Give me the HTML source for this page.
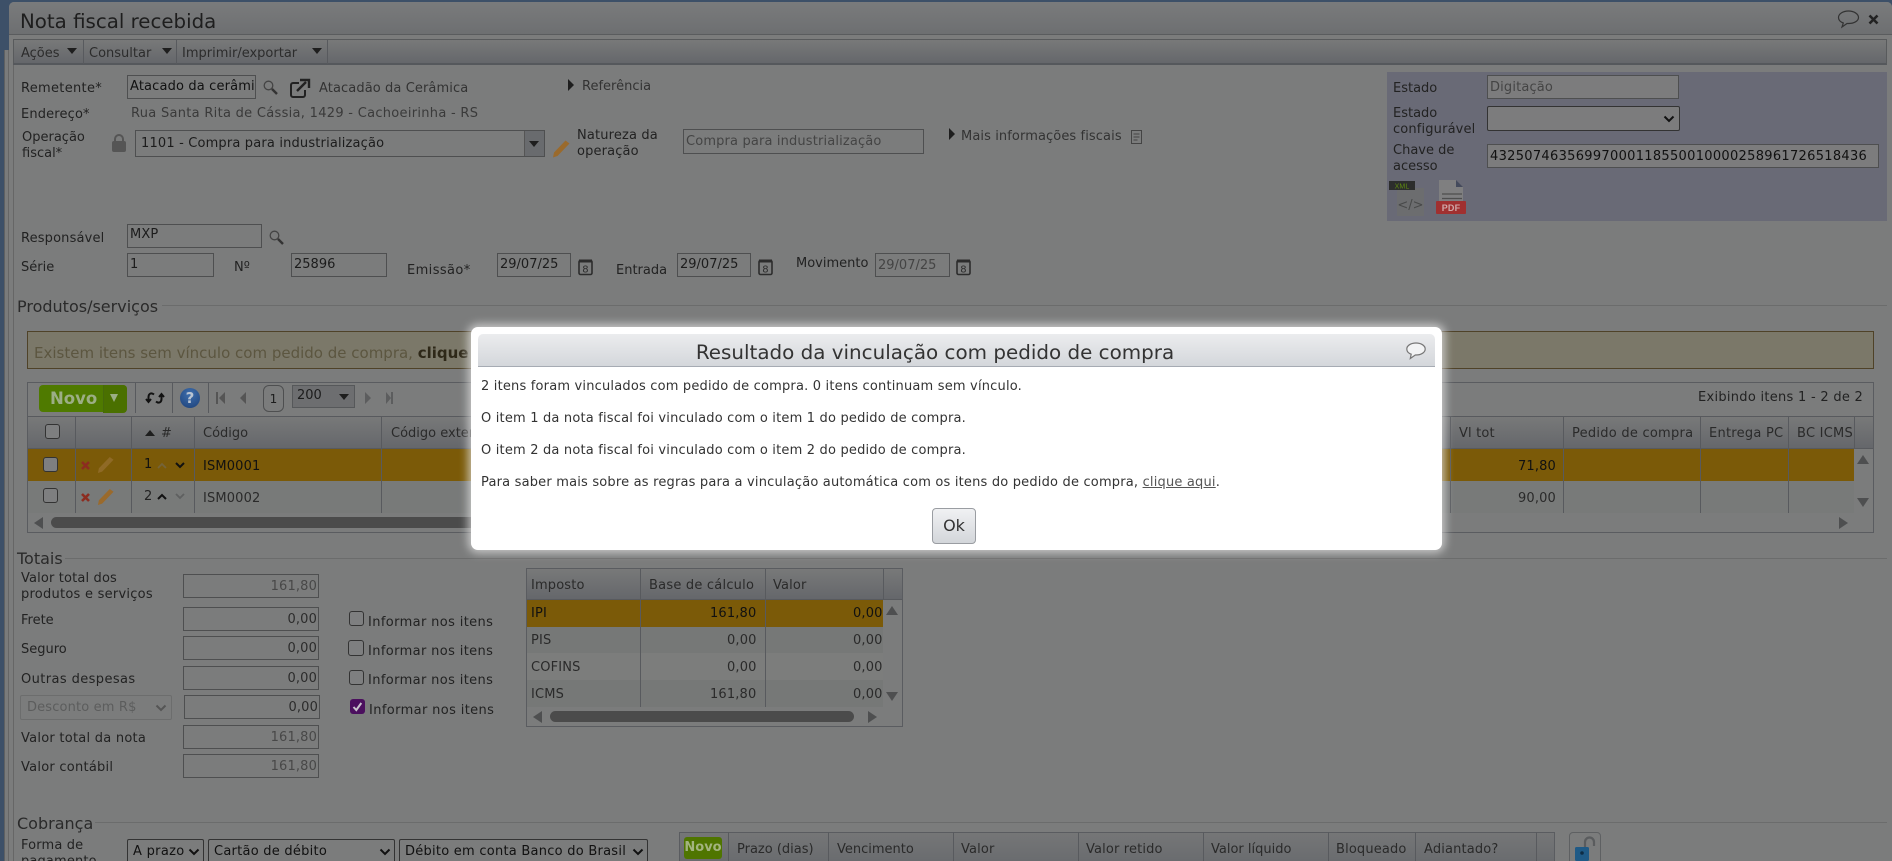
<!DOCTYPE html>
<html lang="pt-BR"><head><meta charset="utf-8"><title>Nota fiscal recebida</title>
<style>
*{box-sizing:border-box}
html,body{margin:0;padding:0;width:1892px;height:861px;overflow:hidden;background:#3d5068}
body{position:relative;font:13px/16px "DejaVu Sans","Liberation Sans",sans-serif;color:#222;letter-spacing:.15px}
.a{position:absolute}
.t{position:absolute;white-space:nowrap;line-height:16px;color:#222;margin-top:2px}
.i{position:absolute;border:1px solid #4e4f50;background:#7b7c7c;color:#1c1c1c;height:24px;line-height:22px;padding:0 2px;white-space:nowrap;overflow:hidden}
.g{color:#444}.r{text-align:right;padding-right:1px;color:#2c2c2c;line-height:24px}.rg{text-align:right;padding-right:1px;color:#484848;line-height:24px}
.s{position:absolute;border:1px solid #333;border-radius:2px;background:#7b7c7c;color:#111;height:26px;line-height:24px;padding-left:5px;white-space:nowrap;overflow:hidden}
.l{position:absolute;height:1px;background:#6b6c6c}
.v{position:absolute;width:1px;background:#585a5e}
.cb{position:absolute;border:1px solid #333;border-radius:3px;background:#7e7f80;width:15px;height:15px}
.hd{background:linear-gradient(#787979,#65676b)}
.tr{position:absolute;width:0;height:0;border-style:solid;border-color:transparent}
svg{position:absolute;overflow:visible}
.lg{position:absolute;font-size:16px;line-height:20px;color:#2a2a2a;white-space:nowrap;letter-spacing:0}
.dt{position:absolute;left:481px;white-space:nowrap;font-size:13px;line-height:16px;color:#333;letter-spacing:.19px}
.w{letter-spacing:.4px}
.n{letter-spacing:0}
</style></head><body>

<div class="a" style="left:4px;top:50px;width:9px;height:811px;background:#7a7b7b;border-left:1px solid #5e6062;border-right:1px solid #5e6062"></div>
<div class="a" style="left:9px;top:2px;width:1883px;height:859px;background:#7b7c7c;border-radius:5px 5px 0 0"></div>
<div class="a" style="left:8px;top:50px;width:1px;height:811px;background:#666"></div>
<div class="a" style="left:13px;top:65px;width:1px;height:796px;background:#666"></div>
<div class="a" style="left:9px;top:2px;width:1883px;height:33px;background:linear-gradient(#7a7b7c,#6d6f71);border-bottom:1px solid #5a5c5e;border-radius:5px 5px 0 0"></div>
<div class="t n" style="left:20px;top:8px;font-size:19.800px;line-height:24px;color:#1e1e1e">Nota fiscal recebida</div>
<svg style="left:1837px;top:10px" width="23" height="18" viewBox="0 0 23 18"><path d="M11.500 1C6 1 1.500 3.800 1.500 7.500c0 2.500 2 4.500 4.800 5.500L5 17l5-3.500h1.500c5.500 0 10-2.500 10-6S17 1 11.500 1z" fill="none" stroke="#333" stroke-width="1.200"/></svg>
<svg style="left:1868px;top:14px" width="11" height="11" viewBox="0 0 11 11"><path d="M1.500 1.500l8 8M9.500 1.500l-8 8" stroke="#222" stroke-width="2.600"/></svg>

<!-- toolbar -->
<div class="a hd" style="left:13px;top:39px;width:1874px;height:26px;border:1px solid #585a5c;border-bottom:2px solid #55585c"></div>
<div class="v" style="left:83px;top:40px;height:24px"></div><div class="v" style="left:176px;top:40px;height:24px"></div><div class="v" style="left:327px;top:40px;height:24px"></div>
<div class="t n" style="left:21px;top:44px;color:#2c2c2c">Ações</div>
<div class="t n" style="left:89px;top:44px;color:#2c2c2c">Consultar</div>
<div class="t n" style="left:182px;top:44px;color:#2c2c2c">Imprimir/exportar</div>
<div class="tr" style="left:67px;top:48px;border-width:6px 5px 0;border-top-color:#1e1e1e"></div>
<div class="tr" style="left:162px;top:48px;border-width:6px 5px 0;border-top-color:#1e1e1e"></div>
<div class="tr" style="left:312px;top:48px;border-width:6px 5px 0;border-top-color:#1e1e1e"></div>

<!-- form top -->
<div class="t" style="left:21px;top:79px;letter-spacing:.3px">Remetente*</div>
<div class="i" style="left:127px;top:75px;width:129px;color:#111">Atacado da cerâmi</div>
<svg style="left:263px;top:80px" width="15" height="15" viewBox="0 0 15 15"><circle cx="5.500" cy="5.500" r="4.300" fill="none" stroke="#444" stroke-width="1.300"/><path d="M9 9l5 5" stroke="#333" stroke-width="2.400"/></svg>
<svg style="left:290px;top:79px" width="21" height="19" viewBox="0 0 21 19"><path d="M9 4H3a2 2 0 0 0-2 2v10a2 2 0 0 0 2 2h10a2 2 0 0 0 2-2v-5" fill="none" stroke="#222" stroke-width="2"/><path d="M7 12l9-9M10 1h9v8" fill="none" stroke="#222" stroke-width="2.400"/></svg>
<div class="t" style="left:319px;top:79px;color:#333;letter-spacing:.1px">Atacadão da Cerâmica</div>
<div class="tr" style="left:568px;top:79px;border-width:6px 0 6px 6px;border-left-color:#1e1e1e"></div>
<div class="t n" style="left:582px;top:77px;color:#333">Referência</div>

<div class="t" style="left:21px;top:105px">Endereço*</div>
<div class="t" style="left:131px;top:104px;color:#3a3a3a;letter-spacing:.29px">Rua Santa Rita de Cássia, 1429 - Cachoeirinha - RS</div>
<div class="t n" style="left:22px;top:128px">Operação</div><div class="t n" style="left:22px;top:144px">fiscal*</div>
<svg style="left:112px;top:134px" width="14" height="18" viewBox="0 0 14 18"><rect x="0" y="7" width="14" height="11" rx="2" fill="#555"/><path d="M3 8V5a4 4 0 0 1 8 0v3" fill="none" stroke="#555" stroke-width="2"/></svg>
<div class="i" style="left:135px;top:130px;width:410px;height:27px;line-height:25px;padding-left:5px;letter-spacing:.17px">1101 - Compra para industrialização</div>
<div class="a hd" style="left:524px;top:131px;width:20px;height:25px;border-left:1px solid #555;background:#696b6e"></div>
<div class="tr" style="left:529px;top:141px;border-width:6px 5.500px 0;border-top-color:#1e1e1e"></div>
<svg style="left:552px;top:140px" width="18" height="18" viewBox="0 0 18 18"><path d="M13.500 .5l4 3L5.500 16 1 17.500 2 12.500z" fill="#9a6a2c"/></svg>
<div class="t" style="left:577px;top:126px">Natureza da</div><div class="t" style="left:577px;top:142px">operação</div>
<div class="i g" style="left:683px;top:129px;width:241px;height:25px;line-height:24px">Compra para industrialização</div>
<div class="tr" style="left:949px;top:128px;border-width:6px 0 6px 6px;border-left-color:#1e1e1e"></div>
<div class="t" style="left:961px;top:127px;color:#333;letter-spacing:.1px">Mais informações fiscais</div>
<svg style="left:1131px;top:130px" width="11" height="14" viewBox="0 0 11 14"><rect x=".5" y=".5" width="10" height="13" fill="none" stroke="#444"/><path d="M2.500 4h6M2.500 7h6M2.500 10h4" stroke="#444"/></svg>

<!-- status panel -->
<div class="a" style="left:1387px;top:72px;width:500px;height:149px;background:#696a76"></div>
<div class="t n" style="left:1393px;top:79px">Estado</div>
<div class="i g" style="left:1487px;top:75px;width:192px;background:#7c7c7d;line-height:23px">Digitação</div>
<div class="t n" style="left:1393px;top:104px">Estado</div><div class="t" style="left:1393px;top:120px">configurável</div>
<div class="s" style="left:1487px;top:106px;width:193px;height:25px;background:#7c7c7d"></div>
<svg style="left:1663px;top:115px" width="12" height="8" viewBox="0 0 12 8"><path d="M1.500 1.500L6 6l4.500-4.500" fill="none" stroke="#111" stroke-width="2"/></svg>
<div class="t n" style="left:1393px;top:141px">Chave de</div><div class="t n" style="left:1393px;top:157px">acesso</div>
<div class="i" style="left:1487px;top:144px;width:392px;background:#7c7c7d;color:#111;letter-spacing:.3px;line-height:23px">43250746356997000118550010000258961726518436</div>
<svg style="left:1389px;top:180px" width="36" height="36" viewBox="0 0 36 36"><rect x="8" y="8" width="27" height="28" fill="#6c6d6f"/><rect x="0" y="1" width="26" height="9" fill="#2c2d2c"/><text x="13" y="8.500" text-anchor="middle" font-size="7" fill="#5e8a10" font-family="Liberation Sans">XML</text><text x="21.500" y="29" text-anchor="middle" font-size="13" fill="#484949" font-family="DejaVu Sans" letter-spacing="0">&lt;/&gt;</text></svg>
<svg style="left:1436px;top:180px" width="30" height="36" viewBox="0 0 30 36"><path d="M3 0h17l7 7v21H3z" fill="#7f7f80"/><path d="M20 0l7 7h-7z" fill="#444a5c"/><path d="M6 14h20M6 18.500h20" stroke="#4e4e4e" stroke-width="1.200"/><rect x="0" y="21" width="30" height="13" rx="1" fill="#a03030"/><text x="15" y="31" text-anchor="middle" font-size="9" font-weight="bold" fill="#cfa9a9" font-family="Liberation Sans">PDF</text></svg>

<!-- dados -->
<div class="t" style="left:21px;top:229px">Responsável</div>
<div class="i" style="left:127px;top:224px;width:135px;line-height:20px">MXP</div>
<svg style="left:269px;top:230px" width="15" height="15" viewBox="0 0 15 15"><circle cx="5.500" cy="5.500" r="4.300" fill="none" stroke="#444" stroke-width="1.300"/><path d="M9 9l5 5" stroke="#333" stroke-width="2.400"/></svg>
<div class="t n" style="left:21px;top:258px">Série</div>
<div class="i n" style="left:127px;top:253px;width:87px">1</div>
<div class="t n" style="left:234px;top:258px">Nº</div>
<div class="i n" style="left:291px;top:253px;width:96px">25896</div>
<div class="t w" style="left:407px;top:261px">Emissão*</div>
<div class="i n" style="left:497px;top:253px;width:74px">29/07/25</div>
<div class="t n" style="left:616px;top:261px">Entrada</div>
<div class="i n" style="left:677px;top:253px;width:74px">29/07/25</div>
<div class="t n" style="left:796px;top:254px">Movimento</div>
<div class="i g n" style="left:875px;top:253px;width:75px;line-height:24px">29/07/25</div>
<svg style="left:578px;top:258px" width="16" height="18" viewBox="0 0 16 18"><rect x="1" y="2.500" width="13" height="14" rx="1.500" fill="none" stroke="#2c2c2c" stroke-width="1.600"/><rect x="1" y="1.500" width="13" height="3" fill="#2c2c2c"/><text x="7.500" y="14.500" text-anchor="middle" font-size="10" fill="#2c2c2c" font-family="DejaVu Sans">8</text></svg>
<svg style="left:758px;top:258px" width="16" height="18" viewBox="0 0 16 18"><rect x="1" y="2.500" width="13" height="14" rx="1.500" fill="none" stroke="#2c2c2c" stroke-width="1.600"/><rect x="1" y="1.500" width="13" height="3" fill="#2c2c2c"/><text x="7.500" y="14.500" text-anchor="middle" font-size="10" fill="#2c2c2c" font-family="DejaVu Sans">8</text></svg>
<svg style="left:956px;top:258px" width="16" height="18" viewBox="0 0 16 18"><rect x="1" y="2.500" width="13" height="14" rx="1.500" fill="none" stroke="#2c2c2c" stroke-width="1.600"/><rect x="1" y="1.500" width="13" height="3" fill="#2c2c2c"/><text x="7.500" y="14.500" text-anchor="middle" font-size="10" fill="#2c2c2c" font-family="DejaVu Sans">8</text></svg>

<!-- produtos -->
<div class="lg" style="left:17px;top:297px">Produtos/serviços</div>
<div class="l" style="left:162px;top:305px;width:1725px"></div>
<div class="a" style="left:27px;top:331px;width:1847px;height:38px;background:#7b7869;border:1px solid #4f4228"></div>
<div class="t n" style="left:34px;top:343px;font-size:15px;color:#5c5640">Existem itens sem vínculo com pedido de compra, <b style="color:#2e2818">clique</b></div>

<div class="a" style="left:27px;top:382px;width:1847px;height:151px;border:1px solid #5a5c60"></div>
<div class="a" style="left:39px;top:385px;width:88px;height:27px;background:#4f7a00;border-radius:4px"></div>
<div class="a" style="left:103px;top:385px;width:24px;height:28px;background:#4a7000;border-radius:0 4px 4px 0;border-left:1px solid #46690a"></div>
<div class="t n" style="left:50px;top:388px;font-size:16.500px;font-weight:bold;line-height:18px;color:#9cae85">Novo</div>
<div class="tr" style="left:110px;top:394px;border-width:8px 4.500px 0;border-top-color:#9cae85"></div>
<div class="v" style="left:135px;top:383px;height:30px"></div><div class="v" style="left:172px;top:383px;height:30px"></div><div class="v" style="left:208px;top:383px;height:30px"></div>
<svg style="left:146px;top:391px" width="18" height="14" viewBox="0 0 18 14"><path d="M8 3.500C5 1 2.500 3 2.500 6v4M0 8l2.500 3L5 8M10 10.500c3 2.500 5.500.5 5.500-2.500V4M13 6l2.500-3L18 6" fill="none" stroke="#111" stroke-width="2"/></svg>
<div class="a n" style="left:180px;top:388px;width:20px;height:20px;border-radius:50%;background:radial-gradient(circle at 50% 30%,#3f6fae,#1c4078);color:#b9c4d2;font:bold 15px/20px 'DejaVu Sans';text-align:center">?</div>
<svg style="left:216px;top:392px" width="30" height="12" viewBox="0 0 30 12"><path d="M0 0h2v12H0zM9 0v12L3 6zM30 0v12l-6-6z" fill="#555"/></svg>
<div class="a n" style="left:263px;top:385px;width:21px;height:27px;border:1px solid #4e4f50;border-radius:6px;text-align:center;line-height:27px;font-size:12px;color:#1c1c1c">1</div>
<div class="a n" style="left:292px;top:385px;width:63px;height:23px;background:#6d6e70;border:1px solid #56585a;line-height:20px;padding-left:4px;color:#1c1c1c">200</div>
<div class="tr" style="left:339px;top:394px;border-width:6px 5.500px 0;border-top-color:#1e1e1e"></div>
<svg style="left:365px;top:392px" width="28" height="12" viewBox="0 0 28 12"><path d="M0 0v12l6-6zM21 0v12l5-6zM26 0h2v12h-2z" fill="#5c5d5e"/></svg>
<div class="t" style="left:1698px;top:388px;color:#222;letter-spacing:.28px">Exibindo itens 1 - 2 de 2</div>

<div class="a hd" style="left:28px;top:416px;width:1845px;height:33px;border-top:1px solid #585a5e;border-bottom:1px solid #585a5e"></div>
<div class="a" style="left:28px;top:449px;width:1826px;height:32px;background:#7b5a08"></div>
<div class="a" style="left:28px;top:481px;width:1826px;height:32px;background:#787a79"></div>
<div class="v" style="left:75px;top:416px;height:97px"></div><div class="v" style="left:131px;top:416px;height:97px"></div><div class="v" style="left:194px;top:416px;height:97px"></div><div class="v" style="left:381px;top:416px;height:97px"></div>
<div class="v" style="left:1450px;top:416px;height:97px"></div><div class="v" style="left:1563px;top:416px;height:97px"></div><div class="v" style="left:1700px;top:416px;height:97px"></div><div class="v" style="left:1788px;top:416px;height:97px"></div><div class="v" style="left:1854px;top:416px;height:33px"></div>
<div class="cb" style="left:45px;top:424px"></div>
<div class="tr" style="left:145px;top:430px;border-width:0 5px 6px;border-bottom-color:#1e1e1e"></div>
<div class="t" style="left:161px;top:424px;color:#2a2a2a">#</div>
<div class="t n" style="left:203px;top:424px;color:#2a2a2a">Código</div>
<div class="t n" style="left:391px;top:424px;color:#2a2a2a">Código externo</div>
<div class="t" style="left:1459px;top:424px;color:#2a2a2a">Vl tot</div>
<div class="t" style="left:1572px;top:424px;color:#2a2a2a;letter-spacing:.25px">Pedido de compra</div>
<div class="t" style="left:1709px;top:424px;color:#2a2a2a;letter-spacing:.25px">Entrega PC</div>
<div class="a" style="left:1797px;top:426px;width:57px;height:16px;overflow:hidden;white-space:nowrap;color:#2a2a2a;letter-spacing:.25px">BC ICMS</div>

<div class="cb" style="left:43px;top:457px"></div><div class="cb" style="left:43px;top:488px"></div>
<svg style="left:81px;top:461px" width="9" height="9" viewBox="0 0 9 9"><path d="M1 1l7 7M8 1L1 8" stroke="#8c2c20" stroke-width="2.600"/></svg>
<svg style="left:81px;top:493px" width="9" height="9" viewBox="0 0 9 9"><path d="M1 1l7 7M8 1L1 8" stroke="#8c2c20" stroke-width="2.600"/></svg>
<svg style="left:97px;top:456px" width="17" height="18" viewBox="0 0 18 18"><path d="M13.500 .5l4 3L5.500 16 1 17.500 2 12.500z" fill="#8f6a26"/></svg>
<svg style="left:97px;top:488px" width="17" height="18" viewBox="0 0 18 18"><path d="M13.500 .5l4 3L5.500 16 1 17.500 2 12.500z" fill="#9a6a2c"/></svg>
<div class="t" style="left:144px;top:455px;color:#111">1</div>
<div class="t" style="left:144px;top:487px;color:#222">2</div>
<svg style="left:157px;top:462px" width="10" height="7" viewBox="0 0 10 7"><path d="M1 6l4-4 4 4" fill="none" stroke="#75643a" stroke-width="1.800"/></svg>
<svg style="left:175px;top:462px" width="10" height="7" viewBox="0 0 10 7"><path d="M1 1l4 4 4-4" fill="none" stroke="#111" stroke-width="2"/></svg>
<svg style="left:157px;top:493px" width="10" height="7" viewBox="0 0 10 7"><path d="M1 6l4-4 4 4" fill="none" stroke="#111" stroke-width="2"/></svg>
<svg style="left:175px;top:493px" width="10" height="7" viewBox="0 0 10 7"><path d="M1 1l4 4 4-4" fill="none" stroke="#5e6060" stroke-width="1.800"/></svg>
<div class="t" style="left:203px;top:457px;color:#111">ISM0001</div>
<div class="t" style="left:203px;top:489px;color:#2a2a2a">ISM0002</div>
<div class="t" style="left:1518px;top:457px;color:#111">71,80</div>
<div class="t" style="left:1518px;top:489px;color:#2a2a2a">90,00</div>
<div class="tr" style="left:1857px;top:455px;border-width:0 6px 9px;border-bottom-color:#4e4f50"></div>
<div class="tr" style="left:1857px;top:498px;border-width:9px 6px 0;border-top-color:#4e4f50"></div>
<div class="tr" style="left:34px;top:517px;border-width:6px 9px 6px 0;border-right-color:#4e4f50"></div>
<div class="a" style="left:51px;top:517px;width:700px;height:11px;background:#4b4b4b;border-radius:6px"></div>
<div class="tr" style="left:1839px;top:517px;border-width:6px 0 6px 9px;border-left-color:#4e4f50"></div>

<!-- totais -->
<div class="lg" style="left:17px;top:549px">Totais</div>
<div class="l" style="left:65px;top:558px;width:1822px"></div>
<div class="t" style="left:21px;top:569px">Valor total dos</div><div class="t" style="left:21px;top:585px;letter-spacing:.25px">produtos e serviços</div>
<div class="i rg" style="left:183px;top:574px;width:136px">161,80</div>
<div class="t n" style="left:21px;top:611px">Frete</div><div class="i r" style="left:183px;top:607px;width:136px">0,00</div>
<div class="t n" style="left:21px;top:640px">Seguro</div><div class="i r" style="left:183px;top:636px;width:136px">0,00</div>
<div class="t w" style="left:21px;top:670px">Outras despesas</div><div class="i r" style="left:183px;top:666px;width:136px">0,00</div>
<div class="s" style="left:20px;top:695px;width:152px;height:25px;border:1px solid #6c6d6d;color:#5c5d5d;padding-left:6px;line-height:23px">Desconto em R$</div>
<svg style="left:155px;top:704px" width="12" height="8" viewBox="0 0 12 8"><path d="M1.500 1.500L6 6l4.500-4.500" fill="none" stroke="#555" stroke-width="2"/></svg>
<div class="i r" style="left:184px;top:695px;width:136px">0,00</div>
<div class="t" style="left:21px;top:729px;letter-spacing:.25px">Valor total da nota</div><div class="i rg" style="left:183px;top:725px;width:136px">161,80</div>
<div class="t" style="left:21px;top:758px;letter-spacing:.25px">Valor contábil</div><div class="i rg" style="left:183px;top:754px;width:136px">161,80</div>
<div class="cb" style="left:349px;top:611px"></div><div class="t" style="left:368px;top:613px;letter-spacing:.37px">Informar nos itens</div>
<div class="cb" style="left:348px;top:640px;width:16px;height:16px"></div><div class="t" style="left:368px;top:642px;letter-spacing:.37px">Informar nos itens</div>
<div class="cb" style="left:349px;top:670px"></div><div class="t" style="left:368px;top:671px;letter-spacing:.37px">Informar nos itens</div>
<div class="a" style="left:350px;top:699px;width:15px;height:15px;background:#4b0f5e;border-radius:3px"></div>
<svg style="left:350px;top:699px" width="15" height="15" viewBox="0 0 15 15"><path d="M3.500 8l2.800 3 5-7" fill="none" stroke="#c9c4cc" stroke-width="2"/></svg>
<div class="t" style="left:369px;top:701px;letter-spacing:.37px">Informar nos itens</div>

<!-- impostos -->
<div class="a" style="left:526px;top:568px;width:377px;height:159px;border:1px solid #5a5c60"></div>
<div class="a hd" style="left:527px;top:569px;width:375px;height:31px;border-bottom:1px solid #585a5e"></div>
<div class="a" style="left:527px;top:600px;width:356px;height:27px;background:#7b5a08"></div>
<div class="a" style="left:527px;top:627px;width:356px;height:26px;background:#767877"></div>
<div class="a" style="left:527px;top:653px;width:356px;height:27px;background:#7c7d7c"></div>
<div class="a" style="left:527px;top:680px;width:356px;height:27px;background:#767877"></div>
<div class="v" style="left:640px;top:569px;height:138px"></div><div class="v" style="left:765px;top:569px;height:138px"></div><div class="v" style="left:883px;top:569px;height:31px"></div>
<div class="t" style="left:531px;top:576px;color:#2a2a2a">Imposto</div><div class="t" style="left:649px;top:576px;color:#2a2a2a;letter-spacing:.22px">Base de cálculo</div><div class="t" style="left:773px;top:576px;color:#2a2a2a">Valor</div>
<div class="t" style="left:531px;top:604px;color:#111">IPI</div><div class="t" style="left:710px;top:604px;color:#111">161,80</div><div class="t" style="left:853px;top:604px;color:#111">0,00</div>
<div class="t" style="left:531px;top:631px;color:#2a2a2a">PIS</div><div class="t" style="left:727px;top:631px;color:#2a2a2a">0,00</div><div class="t" style="left:853px;top:631px;color:#2a2a2a">0,00</div>
<div class="t" style="left:531px;top:658px;color:#2a2a2a">COFINS</div><div class="t" style="left:727px;top:658px;color:#2a2a2a">0,00</div><div class="t" style="left:853px;top:658px;color:#2a2a2a">0,00</div>
<div class="t" style="left:531px;top:685px;color:#2a2a2a">ICMS</div><div class="t" style="left:710px;top:685px;color:#2a2a2a">161,80</div><div class="t" style="left:853px;top:685px;color:#2a2a2a">0,00</div>
<div class="tr" style="left:886px;top:606px;border-width:0 6.500px 9px;border-bottom-color:#4e4f50"></div>
<div class="tr" style="left:886px;top:692px;border-width:9px 6.500px 0;border-top-color:#4e4f50"></div>
<div class="tr" style="left:533px;top:711px;border-width:6px 9px 6px 0;border-right-color:#4e4f50"></div>
<div class="a" style="left:550px;top:711px;width:304px;height:11px;background:#4b4b4b;border-radius:6px"></div>
<div class="tr" style="left:868px;top:711px;border-width:6px 0 6px 9px;border-left-color:#4e4f50"></div>

<!-- cobrança -->
<div class="lg" style="left:17px;top:814px;font-size:16px">Cobrança</div>
<div class="l" style="left:95px;top:822px;width:1792px"></div>
<div class="t" style="left:21px;top:836px">Forma de</div><div class="t" style="left:21px;top:852px">pagamento</div>
<div class="s" style="left:127px;top:839px;width:77px;letter-spacing:.3px">A prazo</div>
<div class="s" style="left:208px;top:839px;width:187px;letter-spacing:.25px">Cartão de débito</div>
<div class="s" style="left:399px;top:839px;width:249px;letter-spacing:.25px">Débito em conta Banco do Brasil</div>
<svg style="left:188px;top:848px" width="12" height="8" viewBox="0 0 12 8"><path d="M1.500 1.500L6 6l4.500-4.500" fill="none" stroke="#111" stroke-width="2"/></svg>
<svg style="left:379px;top:848px" width="12" height="8" viewBox="0 0 12 8"><path d="M1.500 1.500L6 6l4.500-4.500" fill="none" stroke="#111" stroke-width="2"/></svg>
<svg style="left:632px;top:848px" width="12" height="8" viewBox="0 0 12 8"><path d="M1.500 1.500L6 6l4.500-4.500" fill="none" stroke="#111" stroke-width="2"/></svg>

<div class="a hd" style="left:679px;top:832px;width:876px;height:29px;border:1px solid #5a5c60;border-bottom:0;background:linear-gradient(#757677,#6a6c6f)"></div>
<div class="v" style="left:728px;top:832px;height:29px"></div><div class="v" style="left:828px;top:832px;height:29px"></div><div class="v" style="left:953px;top:832px;height:29px"></div><div class="v" style="left:1078px;top:832px;height:29px"></div><div class="v" style="left:1203px;top:832px;height:29px"></div><div class="v" style="left:1328px;top:832px;height:29px"></div><div class="v" style="left:1415px;top:832px;height:29px"></div><div class="v" style="left:1536px;top:832px;height:29px"></div>
<div class="a n" style="left:684px;top:837px;width:38px;height:22px;background:#4f7500;border-radius:3px;color:#a3b47f;font:bold 13px/21px 'DejaVu Sans';text-align:center;overflow:hidden">Novo</div>
<div class="t n" style="left:737px;top:840px;color:#2a2a2a">Prazo (dias)</div>
<div class="t n" style="left:837px;top:840px;color:#2a2a2a">Vencimento</div>
<div class="t" style="left:961px;top:840px;color:#2a2a2a">Valor</div>
<div class="t" style="left:1086px;top:840px;color:#2a2a2a">Valor retido</div>
<div class="t n" style="left:1211px;top:840px;color:#2a2a2a">Valor líquido</div>
<div class="t" style="left:1336px;top:840px;color:#2a2a2a">Bloqueado</div>
<div class="t" style="left:1424px;top:840px;color:#2a2a2a">Adiantado?</div>
<div class="a" style="left:1569px;top:832px;width:32px;height:40px;border:1px solid #5e6062;border-radius:4px"></div>
<svg style="left:1574px;top:836px" width="22" height="25" viewBox="0 0 22 25"><path d="M11 11V6a4.500 4.500 0 0 1 9 0v4" fill="none" stroke="#5a5c5e" stroke-width="2.200"/><rect x="1" y="11" width="14" height="14" rx="1.500" fill="#1f5a86"/><circle cx="8" cy="17" r="1.800" fill="#0e2c44"/></svg>

<!-- dialog -->
<div class="a" style="left:471px;top:327px;width:971px;height:223px;background:#fff;border-radius:7px;box-shadow:0 0 9px 3px rgba(225,225,225,.75)"></div>
<div class="a" style="left:478px;top:334px;width:957px;height:33px;background:linear-gradient(#ebecee,#d4d7db);border-bottom:1px solid #a6abb3;border-radius:5px 5px 0 0"></div>
<div class="t n" style="left:478px;top:339px;width:914px;text-align:center;font-size:19.900px;line-height:24px;color:#333">Resultado da vinculação com pedido de compra</div>
<svg style="left:1406px;top:342px" width="20" height="18" viewBox="0 0 20 18"><path d="M10 1C5 1 .8 3.500.8 7c0 2.400 1.900 4.300 4.400 5.200L4.300 16.500l5-3.500H10c5 0 9.200-2.500 9.200-6S15 1 10 1z" fill="#f2f3f4" stroke="#777" stroke-width="1.200"/></svg>
<div class="dt" style="top:379px">2 itens foram vinculados com pedido de compra. 0 itens continuam sem vínculo.</div>
<div class="dt" style="top:411px">O item 1 da nota fiscal foi vinculado com o item 1 do pedido de compra.</div>
<div class="dt" style="top:443px">O item 2 da nota fiscal foi vinculado com o item 2 do pedido de compra.</div>
<div class="dt" style="top:475px">Para saber mais sobre as regras para a vinculação automática com os itens do pedido de compra, <span style="color:#555;text-decoration:underline">clique aqui</span>.</div>
<div class="a n" style="left:932px;top:508px;width:44px;height:36px;background:linear-gradient(#f0f1f3,#d3d6da);border:1px solid #9a9da2;border-radius:4px;text-align:center;font-size:16px;line-height:34px;color:#333">Ok</div>

</body></html>
